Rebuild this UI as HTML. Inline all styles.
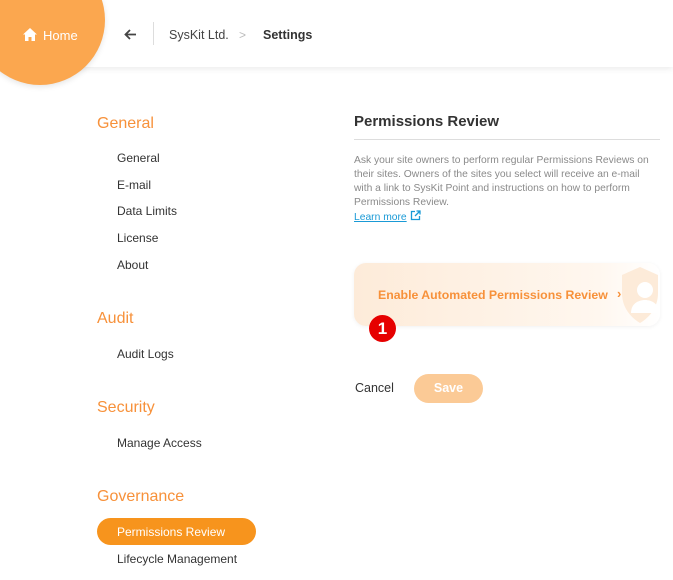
<!DOCTYPE html>
<html><head><meta charset="utf-8"><style>
*{margin:0;padding:0;box-sizing:border-box}
body{width:673px;height:580px;overflow:hidden;background:#fff;font-family:"Liberation Sans",sans-serif;position:relative}
.hdr{position:absolute;left:0;top:0;width:673px;height:67px;background:#fff;box-shadow:0 2px 6px rgba(0,0,0,.08)}
.circ{position:absolute;left:-25px;top:-45px;width:130px;height:130px;border-radius:50%;background:#fba74f;box-shadow:0 2px 6px rgba(0,0,0,.1)}
.abs{position:absolute;white-space:nowrap}
.h{color:#f7913a;font-size:16px}
.it{color:#333;font-size:12px;left:117px}
</style></head><body>
<div class="hdr"></div>
<div class="circ"></div>
<svg class="abs" style="left:23px;top:28px" width="14" height="13" viewBox="0 0 14 13"><path d="M7 0L0 6.5h2V13h3.5V9h3v4H12V6.5h2z" fill="#fff"/></svg>
<div class="abs" style="left:43px;top:28px;color:#fff;font-size:13px">Home</div>
<svg class="abs" style="left:124px;top:29px" width="13" height="11" viewBox="0 0 13 11"><path d="M12 5.5H2M6 1L1.5 5.5 6 10" stroke="#444" stroke-width="1.8" fill="none"/></svg>
<div class="abs" style="left:153px;top:22px;width:1px;height:23px;background:#ddd"></div>
<div class="abs" style="left:169px;top:28px;font-size:12.5px;color:#444">SysKit Ltd.</div>
<div class="abs" style="left:239px;top:28px;font-size:12px;color:#bbb">&gt;</div>
<div class="abs" style="left:263px;top:28px;font-size:12.5px;color:#333;font-weight:bold">Settings</div>

<div class="abs h" style="left:97px;top:115px">General</div>
<div class="abs it" style="top:151px">General</div>
<div class="abs it" style="top:178px">E-mail</div>
<div class="abs it" style="top:204px">Data Limits</div>
<div class="abs it" style="top:231px">License</div>
<div class="abs it" style="top:258px">About</div>
<div class="abs h" style="left:97px;top:310px">Audit</div>
<div class="abs it" style="top:347px">Audit Logs</div>
<div class="abs h" style="left:97px;top:399px">Security</div>
<div class="abs it" style="top:436px">Manage Access</div>
<div class="abs h" style="left:97px;top:488px">Governance</div>
<div class="abs" style="left:97px;top:518px;width:159px;height:27px;border-radius:14px;background:#f7941d"></div>
<div class="abs it" style="top:525px;color:#fff">Permissions Review</div>
<div class="abs it" style="top:552px">Lifecycle Management</div>

<div class="abs" style="left:354px;top:113px;font-size:15px;font-weight:bold;color:#333">Permissions Review</div>
<div class="abs" style="left:354px;top:139px;width:306px;height:1px;background:#ddd"></div>
<div class="abs" style="left:354px;top:154px;width:306px;font-size:10.3px;line-height:14px;color:#8a8a8a;white-space:normal">Ask your site owners to perform regular Permissions Reviews on their sites. Owners of the sites you select will receive an e-mail with a link to SysKit Point and instructions on how to perform Permissions Review.<br><span style="color:#1a9ad6;text-decoration:underline">Learn more</span> <svg width="11" height="11" viewBox="0 0 11 11" style="vertical-align:-1px"><path d="M5 1.5H1.5v8h8V6M6.5 1h3.5v3.5M10 1L5 6" stroke="#1a9ad6" stroke-width="1.3" fill="none"/></svg></div>

<div class="abs" style="left:354px;top:263px;width:306px;height:63px;border-radius:12px;background:linear-gradient(90deg,#fdebd9,#fff7ef 80%,#fff);box-shadow:0 1px 4px rgba(0,0,0,.06);overflow:hidden">
<svg style="position:absolute;left:266px;top:2px" width="40" height="60" viewBox="0 0 40 60"><path d="M20 2L2 10v18c0 14 8 24 18 30 10-6 18-16 18-30V10z" fill="#fdebd9"/><circle cx="25" cy="25" r="8" fill="#fff"/><path d="M11 48c0-9 7-13 14-13s14 4 14 13z" fill="#fff"/></svg>
</div>
<div class="abs" style="left:378px;top:288px;font-size:12.3px;font-weight:bold;color:#f7913a">Enable Automated Permissions Review</div>
<div class="abs" style="left:617px;top:286px;font-size:13px;font-weight:bold;color:#f7913a">&rsaquo;</div>
<div class="abs" style="left:369px;top:315px;width:27px;height:27px;border-radius:50%;background:#e60000;color:#fff;font-size:17px;font-weight:bold;text-align:center;line-height:27px">1</div>

<div class="abs" style="left:355px;top:381px;font-size:12.5px;color:#333">Cancel</div>
<div class="abs" style="left:414px;top:374px;width:69px;height:29px;border-radius:15px;background:#fbca96;color:#fff;font-size:12.5px;font-weight:bold;text-align:center;line-height:29px">Save</div>
</body></html>
